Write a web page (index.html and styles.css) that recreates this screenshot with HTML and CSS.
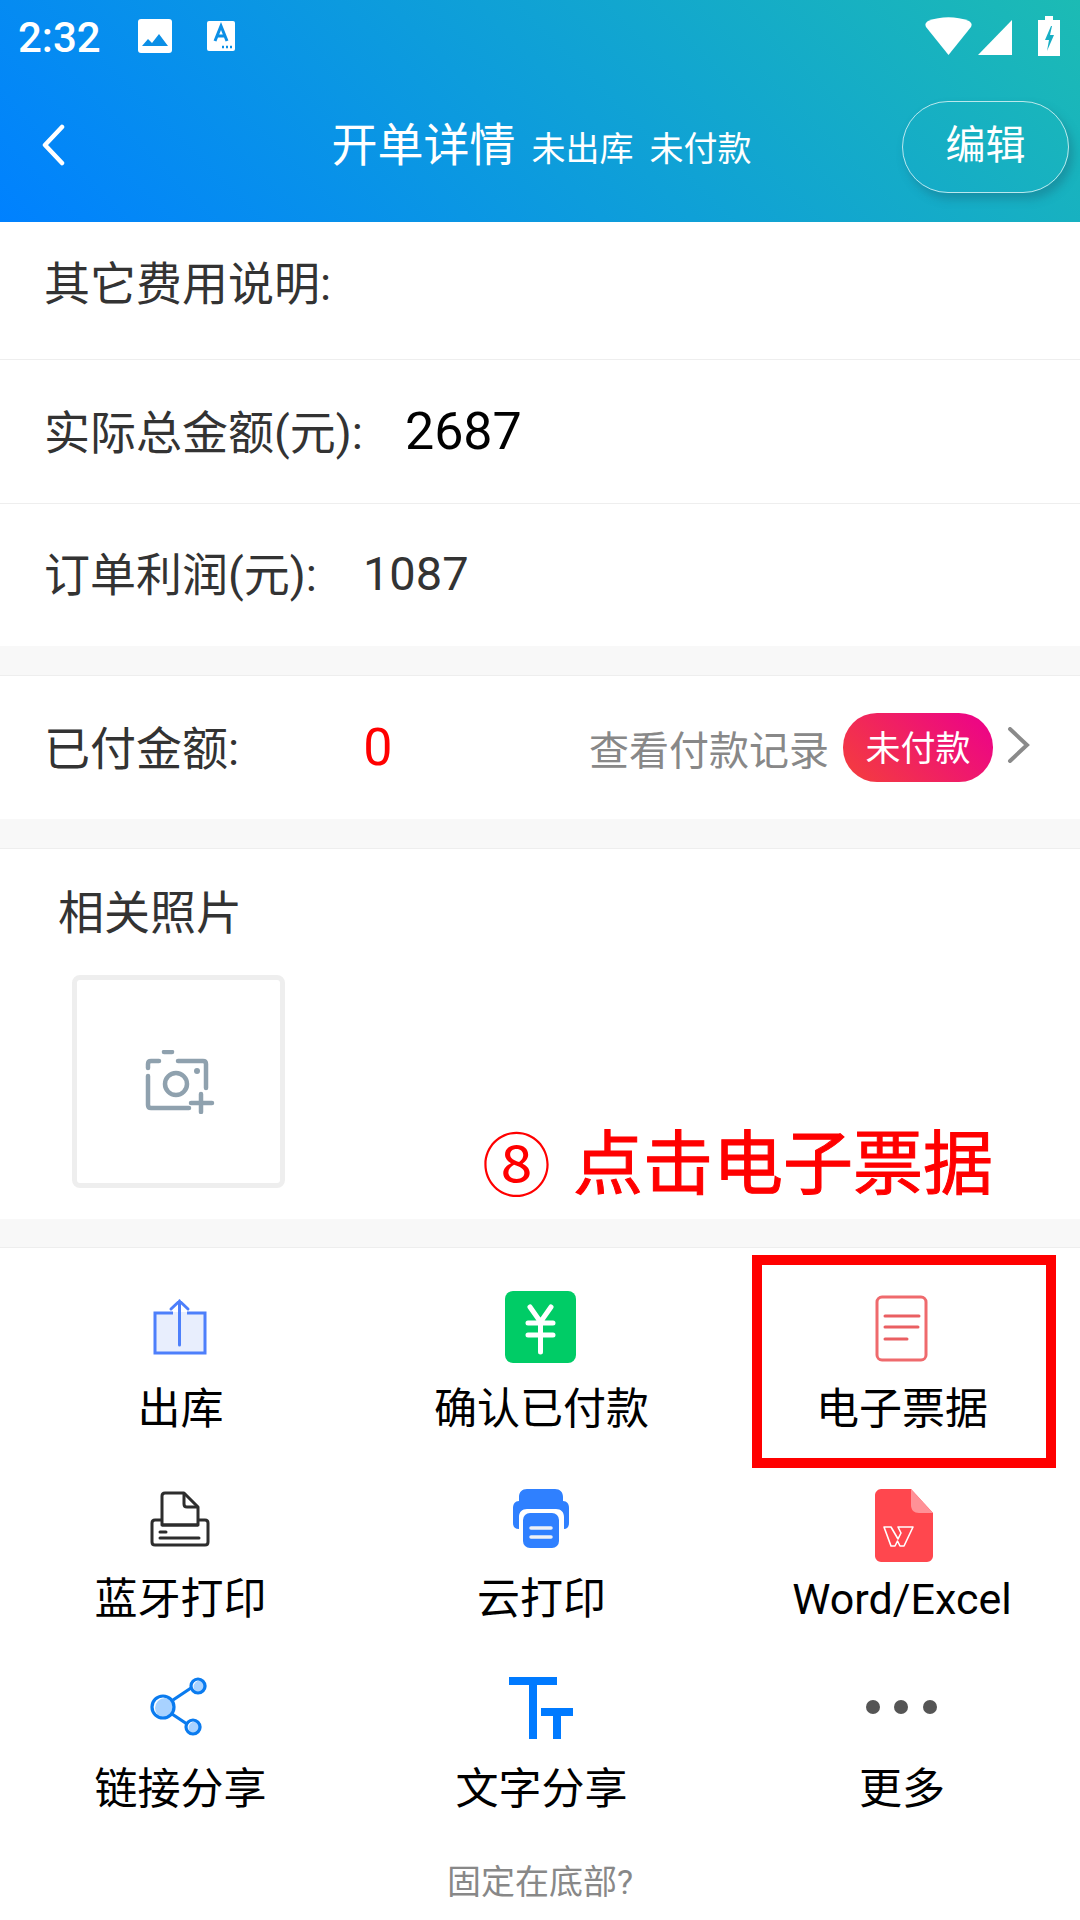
FILE: index.html
```html
<!DOCTYPE html>
<html lang="zh-CN">

<head>
  <meta charset="UTF-8" />
  <meta name="viewport" content="width=device-width, initial-scale=1.0" />
  <title>开单详情</title>
  <link rel="stylesheet" href="styles.css">
</head>

<body>
  <div class="page">
    <div class="header">
      <div class="status">
        <span class="time">2:32</span>
        <svg class="st-img" viewBox="0 0 34 34"><rect width="34" height="34" rx="3" fill="#fff"/><path d="M4 27l6-7 4 4 7-9 9 12z" fill="#0b8fe6"/></svg>
        <svg class="st-a" viewBox="0 0 28 30"><rect width="28" height="30" rx="2" fill="#fff"/><path d="M8 20l6-15 6 15M10 15h8" fill="none" stroke="#0b8fe6" stroke-width="3"/><path d="M15 26h2M19 26h2M23 26h2" stroke="#0b8fe6" stroke-width="2.4"/></svg>
        <div class="status-right">
          <svg class="st-wifi" viewBox="0 0 47 38"><path d="M23.5 38L1 10C0 8 0 6 3 4c13-5 28-5 41 0 3 2 3 4 2 6z" fill="#fff"/></svg>
          <svg class="st-signal" viewBox="0 0 34 35"><path d="M34 0v35H0z" fill="#fff"/></svg>
          <svg class="st-bat" viewBox="0 0 22 40"><path d="M7 0h8v4h7v36H0V4h7z" fill="#fff"/><path d="M13 10l-6 14h4l-2 11 7-16h-4l2-9z" fill="#17aec4"/></svg>
        </div>
      </div>
      <div class="nav">
        <div class="nav-left">
          <svg class="back" viewBox="0 0 24 42"><path d="M21 3L4 21l17 18" fill="none" stroke="#fff" stroke-width="4.5" stroke-linecap="round" stroke-linejoin="round"/></svg>
        </div>
        <div class="nav-title">开单详情<span class="sub">未出库</span><span class="sub">未付款</span></div>
        <div class="nav-right"><a class="edit" href="javascript:;">编辑</a></div>
      </div>
    </div>

    <div class="row">
      <span class="label">其它费用说明:</span>
    </div>
    <div class="row">
      <span class="label">实际总金额(元):</span>
      <span class="total">2687</span>
    </div>
    <div class="row">
      <span class="label">订单利润(元):</span>
      <span class="profit">1087</span>
    </div>

    <div class="row pay">
      <span class="label">已付金额:</span>
      <span class="paid">0</span>
      <span class="record">查看付款记录</span>
      <span class="tag">未付款</span>
      <svg class="arrow" viewBox="0 0 24 36"><path d="M3 2l17 16L3 34" fill="none" stroke="#8a8a8a" stroke-width="4" stroke-linecap="round"/></svg>
    </div>

    <div class="photos">
      <h3>相关照片</h3>
      <div class="photo-box">
        <svg viewBox="0 0 70 64" class="camera">
          <g fill="none" stroke="#8fa1ae" stroke-width="4.5" stroke-linecap="round">
            <path d="M19 2h8"/>
            <path d="M3 18v-4c0-2 1-3 3-3h8M33 11h25c2 0 3 1 3 3v24M44 58H6c-2 0-3-1-3-3V26"/>
            <circle cx="31" cy="34" r="11"/>
            <path d="M56 44v18M46 53h21"/>
          </g>
          <circle cx="52" cy="21" r="3" fill="#8fa1ae"/>
        </svg>
      </div>
    </div>

    <div class="grid">
      <div class="cell">
        <svg class="ico" viewBox="0 0 80 80">
          <path d="M14 25h52v42H14z" fill="#e8eefd"/>
          <path d="M33 26H15v40h50V26H47" fill="none" stroke="#4d7ffb" stroke-width="3"/>
          <path d="M39.500 14v44M31 22l8.500-8 8.500 8" fill="none" stroke="#4d7ffb" stroke-width="3" stroke-linecap="round"/>
        </svg>
        <span>出库</span>
      </div>
      <div class="cell">
        <svg class="ico" viewBox="0 0 80 80">
          <rect x="5" y="4" width="71" height="72" rx="8" fill="#00cc66"/>
          <path d="M30 20l10.500 15L51 20M28 36h25M28 48h25M40.500 35v30" fill="none" stroke="#fff" stroke-width="5" stroke-linecap="round"/>
        </svg>
        <span>确认已付款</span>
      </div>
      <div class="cell">
        <svg class="ico" viewBox="0 0 80 80">
          <rect x="17" y="10" width="49" height="63" rx="5" fill="none" stroke="#ef6a6d" stroke-width="3"/>
          <path d="M25 29h34M25 40h33M25 52h22" stroke="#ea5f62" stroke-width="3" stroke-linecap="round"/>
        </svg>
        <span>电子票据</span>
      </div>
      <div class="cell">
        <svg class="ico" viewBox="0 0 80 80">
          <path d="M22 46V17c0-2 1-3 3-3h19l14 14v18z" fill="#fff" stroke="#2d2d2d" stroke-width="3" stroke-linejoin="round"/>
          <path d="M44 14v11c0 2 1 3 3 3h11" fill="none" stroke="#2d2d2d" stroke-width="3"/>
          <path d="M22 41h-7c-2 0-3 1-3 3v19c0 2 1 3 3 3h50c2 0 3-1 3-3V44c0-2-1-3-3-3h-7M22 46h36" fill="none" stroke="#2d2d2d" stroke-width="3"/>
          <path d="M20 53h6M20 59h39" stroke="#2d2d2d" stroke-width="3" stroke-linecap="round"/>
        </svg>
        <span>蓝牙打印</span>
      </div>
      <div class="cell">
        <svg class="ico" viewBox="0 0 80 80">
          <path d="M19 22v-4c0-5 3-8 8-8h28c5 0 8 3 8 8v4c4 0 6 3 6 7v15c0 4-2 6-5 6V38c0-5-3-8-8-8H27c-5 0-8 3-8 8v12c-4 0-6-2-6-6V29c0-4 2-7 6-7z" fill="#2f80ff"/>
          <rect x="23" y="34" width="36" height="35" rx="7" fill="#2f80ff"/>
          <path d="M31 49h20M31 58h20" stroke="#eef1f6" stroke-width="3.500" stroke-linecap="round"/>
        </svg>
        <span>云打印</span>
      </div>
      <div class="cell">
        <svg class="ico" viewBox="0 0 80 80">
          <path d="M21 10h30l22 24v43c0 3-3 6-6 6H21c-3 0-6-3-6-6V16c0-3 3-6 6-6z" fill="#ff474e"/>
          <path d="M51 10l22 24H59c-5 0-8-3-8-8z" fill="#ff9197"/>
          <path d="M24 48h7l7 12 3-6-3-6h15l-9 19h-4l-2.500-5-2.500 5h-4z" fill="none" stroke="#fff" stroke-width="1.600" stroke-linejoin="round"/>
        </svg>
        <span class="word">Word/Excel</span>
      </div>
      <div class="cell">
        <svg class="ico" viewBox="0 0 80 80">
          <circle cx="25" cy="41" r="10" fill="#a8d2ff"/><circle cx="60" cy="20" r="6.500" fill="#a8d2ff"/><circle cx="55" cy="61" r="6.500" fill="#a8d2ff"/>
          <g fill="none" stroke="#0a7bef" stroke-width="3.200">
            <circle cx="23" cy="40" r="11"/><circle cx="58" cy="19" r="7"/><circle cx="53" cy="60" r="7"/>
            <path d="M33 33l18-12M32 47l15 10"/>
          </g>
        </svg>
        <span>链接分享</span>
      </div>
      <div class="cell">
        <svg class="ico" viewBox="0 0 80 80">
          <path d="M9 10h48v8H37v54h-8V18H9zM41 41h32v8H61v23h-8V49H41z" fill="#007aff"/>
        </svg>
        <span>文字分享</span>
      </div>
      <div class="cell">
        <svg class="ico" viewBox="0 0 80 80">
          <g fill="#555"><circle cx="13" cy="40" r="7"/><circle cx="41" cy="40" r="7"/><circle cx="70" cy="40" r="7"/></g>
        </svg>
        <span>更多</span>
      </div>
    </div>
    <div class="fix">固定在底部?</div>

    <!-- 标注 -->
    <div class="note"><span class="note-num">⑧</span>点击电子票据</div>
    <div class="note-box"></div>
  </div>
</body>

</html>
```

FILE: styles.css
```css
* {
  margin: 0;
  padding: 0;
  box-sizing: border-box;
}

body {
  font-family: Roboto, "Noto Sans CJK SC", sans-serif;
  background: #fff;
  color: #333;
}

.page {
  position: relative;
  width: 1080px;
  height: 1920px;
  overflow: hidden;
}

.header {
  height: 222px;
  background: linear-gradient(45deg, #0081ff, #1cbbb4);
  color: #fff;
}

.status {
  height: 72px;
  display: flex;
  align-items: center;
  padding-left: 18px;
}

.time {
  width: 120px;
  padding-top: 4px;
  font-size: 42px;
  font-weight: 500;
  line-height: 68px;
}

.st-img {
  width: 34px;
  height: 34px;
}

.st-a {
  width: 28px;
  height: 30px;
  margin-left: 35px;
}

.status-right {
  margin-left: auto;
  padding-right: 20px;
  display: flex;
  align-items: flex-end;
  height: 40px;
}

.st-wifi {
  width: 47px;
  height: 38px;
  margin-bottom: 1px;
}

.st-signal {
  width: 34px;
  height: 35px;
  margin-left: 6px;
  margin-right: 2px;
  margin-bottom: 1px;
}

.st-bat {
  width: 22px;
  height: 40px;
  margin-left: 24px;
}

.nav {
  height: 150px;
  display: flex;
  align-items: center;
}

.nav-left,
.nav-right {
  width: 178px;
  flex: none;
}

.nav-left {
  padding-left: 41px;
  padding-bottom: 4px;
  display: flex;
}

.back {
  width: 24px;
  height: 42px;
}

.nav-title {
  flex: 1;
  padding: 0 0 12px 3px;
  text-align: center;
  font-size: 46px;
  white-space: nowrap;
}

.nav-title .sub {
  font-size: 34px;
  margin-left: 16px;
}

.edit {
  display: block;
  width: 167px;
  height: 92px;
  line-height: 88px;
  text-align: center;
  font-size: 40px;
  color: #fff;
  text-decoration: none;
  border: 1px solid rgba(255, 255, 255, 0.7);
  border-radius: 46px;
  box-shadow: 4px 6px 10px rgba(26, 90, 110, 0.35);
}

.row {
  height: 144px;
  display: flex;
  align-items: center;
  padding-left: 44px;
  font-size: 46px;
  border-bottom: 1px solid #eee;
}

.row:nth-child(2) {
  height: 138px;
  padding-bottom: 15px;
}

.row:nth-child(4) {
  height: 142px;
  padding-bottom: 3px;
  border-bottom: 0;
}

.label {
  margin-bottom: 6px;
}

.total {
  margin-left: 42px;
  font-size: 52px;
  color: #000;
}

.profit {
  margin-left: 46px;
  font-size: 47px;
}

.pay {
  height: 144px;
  background: #fff;
  border-top: 1px solid #eee;
  border-bottom: 0;
  box-shadow: 0 -29px 0 #f8f8f8;
  margin-top: 29px;
}

.paid {
  margin-left: 124px;
  font-size: 52px;
  color: #f00;
}

.record {
  margin-left: auto;
  font-size: 40px;
  color: #888;
}

.tag {
  width: 150px;
  height: 69px;
  margin-left: 14px;
  line-height: 73px;
  text-align: center;
  font-size: 35px;
  color: #fff;
  border-radius: 34px;
  background: linear-gradient(45deg, #f43f3b, #ec008c);
}

.arrow {
  width: 24px;
  height: 36px;
  margin: 0 49px 6px 14px;
}

.photos {
  height: 400px;
  padding: 35px 0 0 58px;
  border-top: 29px solid #f8f8f8;
  box-shadow: inset 0 1px #eee;
}

.photos h3 {
  font-size: 46px;
  font-weight: normal;
  line-height: 60px;
}

.photo-box {
  width: 213px;
  height: 213px;
  margin: 32px 0 0 14px;
  border: 5px solid #eee;
  border-radius: 8px;
  display: flex;
  align-items: center;
  justify-content: center;
}

.camera {
  width: 70px;
  height: 64px;
  margin-left: 2px;
}

.grid {
  height: 630px;
  padding-top: 40px;
  border-top: 28px solid #f8f8f8;
  box-shadow: inset 0 1px #eee;
  display: grid;
  grid-template-columns: 361px 361px 360px;
  grid-auto-rows: 190px;
}

.cell {
  display: flex;
  flex-direction: column;
  align-items: center;
  font-size: 43px;
  color: #000;
}

.cell span {
  line-height: 60px;
  margin-top: 12px;
}

.cell:nth-child(n+4):nth-child(-n+6) .ico {
  margin-top: 2px;
}

.cell:nth-child(n+4):nth-child(-n+6) span {
  margin-top: 10px;
}

.cell .word {
  margin-top: 8px;
}

.ico {
  width: 80px;
  height: 80px;
  margin-left: -3px;
  overflow: visible;
}

.cell:nth-child(3n+1) .ico {
  margin-left: -1px;
}

.cell:nth-child(3n) .ico {
  margin-left: -5px;
}

.fix {
  position: absolute;
  left: 0;
  right: 0;
  top: 1860px;
  text-align: center;
  font-size: 34px;
  line-height: 44px;
  color: #888;
}

.note {
  position: absolute;
  left: 482px;
  top: 1117px;
  display: flex;
  align-items: center;
  font-size: 70px;
  line-height: 90px;
  color: #f00;
  -webkit-text-stroke: 1px #f00;
}

.note-num {
  width: 91px;
  padding-top: 6px;
  font-size: 69px;
  -webkit-text-stroke: 0;
}

.note-box {
  position: absolute;
  left: 752px;
  top: 1255px;
  width: 304px;
  height: 213px;
  border: 10px solid #f00;
}
```
